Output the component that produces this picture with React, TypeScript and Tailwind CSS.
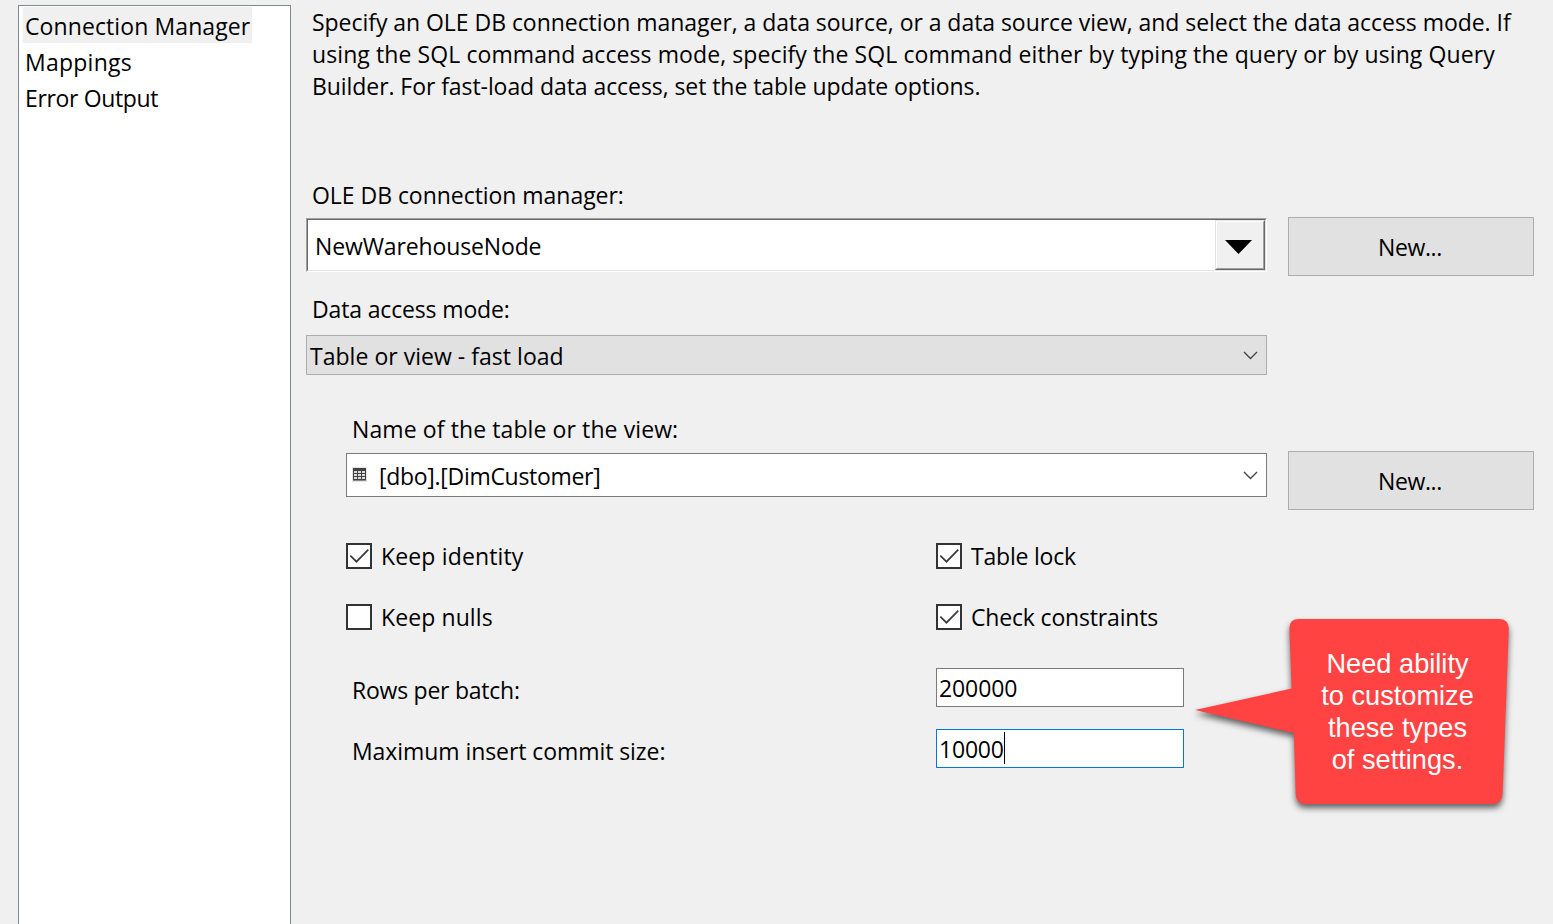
import type { ReactNode } from "react";

function Chevron() {
  return (
    <svg width="15" height="9" viewBox="0 0 15 9" fill="none" className="shrink-0">
      <path d="M1 1 L7.5 7.4 L14 1" stroke="#444" strokeWidth="1.4" />
    </svg>
  );
}

function TableIcon() {
  return (
    <svg width="15" height="15" viewBox="0 0 15 15" className="shrink-0" shapeRendering="crispEdges">
      <rect width="15" height="15" fill="#e2e2e2" />
      <rect x="1" y="1" width="13" height="12" fill="#424242" />
      <rect x="1" y="13" width="13" height="1" fill="#8a8a8a" />
      <g fill="#dcdcdc">
        <rect x="2" y="4" width="3" height="2" />
        <rect x="6" y="4" width="3" height="2" />
        <rect x="10" y="4" width="3" height="2" />
        <rect x="2" y="7" width="3" height="2" />
        <rect x="6" y="7" width="3" height="2" />
        <rect x="10" y="7" width="3" height="2" />
        <rect x="2" y="10" width="3" height="2" />
        <rect x="6" y="10" width="3" height="2" />
        <rect x="10" y="10" width="3" height="2" />
      </g>
    </svg>
  );
}

function Checkbox({ checked, children, className }: { checked?: boolean; children: ReactNode; className: string }) {
  return (
    <div role="checkbox" aria-checked={!!checked} className={`flex h-[32px] items-start ${className}`}>
      <span className="mt-[3px] block size-[26px] shrink-0 border-2 border-[#333] bg-white">
        {checked && (
          <svg width="22" height="22" viewBox="0 0 22 22" fill="none">
            <path d="M2.3 10.7 L8.5 16.7 L20.3 4.6" stroke="#3c3c3c" strokeWidth="1.7" />
          </svg>
        )}
      </span>
      <span className="ml-[9px]">{children}</span>
    </div>
  );
}

function NewButton() {
  return (
    <button className="flex h-[59px] w-[246px] shrink-0 items-start justify-center border border-[#adadad] bg-[#e1e1e1] pt-[13px] pr-[2px] tracking-[-0.4px]">
      New...
    </button>
  );
}

function Callout() {
  return (
    <div className="absolute top-[610px] left-[1185px] h-[210px] w-[340px]">
      <svg width="340" height="210" viewBox="1185 610 340 210" className="absolute inset-0 drop-shadow-[0_4px_3px_rgba(0,0,0,0.6)]">
        <path
          fill="#ff4343"
          d="M1299 619 H1499 Q1509 619 1508.8 629 L1502.6 794 Q1502 804 1492 804 H1306 Q1296 804 1295.7 794 L1293.8 733 L1195 710 L1291.6 688.5 L1289.4 629 Q1289 619 1299 619 Z"
        />
      </svg>
      <p className="relative pt-[38px] pl-[85px] text-center font-['Liberation_Sans',Arial,sans-serif] text-[27.2px] leading-[32px] text-white">
        Need ability
        <br />
        to customize
        <br />
        these types
        <br />
        of settings.
      </p>
    </div>
  );
}

export default function App() {
  return (
    <div className="relative flex h-[924px] w-[1553px] overflow-hidden bg-[#f0f0f0] font-['Open_Sans','Noto_Sans',sans-serif] text-[23px] leading-[32px] whitespace-nowrap text-black">
      <nav className="mt-[5px] ml-[18px] w-[273px] shrink-0 border border-b-0 border-[#828790] bg-white pt-px pl-[4px] leading-[36px]">
        <div className="h-[36px] w-[229px] bg-[#f0f0f0] pt-px pl-[2px] tracking-[0.1px]">Connection Manager</div>
        <div className="h-[36px] pt-px pl-[2px] tracking-[0.25px]">Mappings</div>
        <div className="h-[36px] pt-px pl-[2px] tracking-[-0.35px]">Error Output</div>
      </nav>

      <main className="ml-[15px] flex w-[1228px] shrink-0 flex-col">
        <div className="mt-[6px] ml-[6px]">
          <div className="tracking-[-0.045px]">
            Specify an OLE DB connection manager, a data source, or a data source view, and select the data access mode. If
          </div>
          <div className="tracking-[0.09px]">
            using the SQL command access mode, specify the SQL command either by typing the query or by using Query
          </div>
          <div className="tracking-[-0.07px]">
            Builder. For fast-load data access, set the table update options.
          </div>
        </div>

        <div className="mt-[77px] ml-[6px] tracking-[-0.04px]">OLE DB connection manager:</div>
        <div className="mt-[6px] flex items-start justify-between">
          <div className="mt-px h-[54px] w-[961px] border border-t-[#a0a0a0] border-r-white border-b-white border-l-[#a0a0a0]">
            <div className="flex h-[52px] border border-t-[#696969] border-r-[#e3e3e3] border-b-[#e3e3e3] border-l-[#696969] bg-white">
              <div className="grow pt-[10px] pl-[7px] tracking-[-0.13px]">NewWarehouseNode</div>
              <div className="h-[50px] w-[50px] shrink-0 border border-t-[#e3e3e3] border-r-[#696969] border-b-[#696969] border-l-[#e3e3e3]">
                <div className="flex h-[48px] items-start justify-center border border-t-white border-r-[#a0a0a0] border-b-[#a0a0a0] border-l-white bg-[#f0f0f0] pt-[18px] pr-[3px]">
                  <svg width="27" height="14" viewBox="0 0 27 14">
                    <path d="M0 0 H27 L13.5 14 Z" />
                  </svg>
                </div>
              </div>
            </div>
          </div>
          <NewButton />
        </div>

        <div className="mt-[17px] ml-[6px] tracking-[-0.15px]">Data access mode:</div>
        <div className="mt-[10px] flex h-[40px] w-[961px] items-start justify-between border border-[#adadad] bg-[#e1e1e1] pr-[8px] pl-[3px]">
          <span className="mt-[4px] tracking-[0.03px]">Table or view - fast load</span>
          <span className="mt-[15px] flex">
            <Chevron />
          </span>
        </div>

        <div className="mt-[38px] ml-[46px] tracking-[0.1px]">Name of the table or the view:</div>
        <div className="mt-[6px] ml-[40px] flex items-start justify-between">
          <div className="mt-[2px] flex h-[44px] w-[921px] items-start border border-[#7a7a7a] bg-white pr-[8px] pl-[5px]">
            <span className="mt-[13px] flex">
              <TableIcon />
            </span>
            <span className="mt-[6px] ml-[12px] grow tracking-[-0.3px]">[dbo].[DimCustomer]</span>
            <span className="mt-[17px] flex">
              <Chevron />
            </span>
          </div>
          <NewButton />
        </div>

        <div className="mt-[30px] ml-[40px] grid grid-cols-[590px_auto] gap-y-[29px]">
          <Checkbox checked className="tracking-[0.15px]">Keep identity</Checkbox>
          <Checkbox checked className="tracking-[-0.2px]">Table lock</Checkbox>
          <Checkbox className="tracking-[0.1px]">Keep nulls</Checkbox>
          <Checkbox checked className="tracking-[-0.17px]">Check constraints</Checkbox>
        </div>

        <div className="mt-[35px] ml-[46px] grid grid-cols-[584px_248px] gap-y-[22px]">
          <div className="pt-[6px] tracking-[-0.24px]">Rows per batch:</div>
          <div className="h-[39px] border border-[#7a7a7a] bg-white pt-[3px] pl-[2px] tracking-[-0.1px]">200000</div>
          <div className="pt-[6px] tracking-[-0.07px]">Maximum insert commit size:</div>
          <div className="flex h-[39px] border border-[#0078d7] bg-white pl-[2px]">
            <span className="mt-[3px] w-[65px] tracking-[-0.2px]">10000</span>
            <span className="mt-[2px] h-[32px] w-px bg-black" />
          </div>
        </div>
      </main>

      <Callout />
    </div>
  );
}
